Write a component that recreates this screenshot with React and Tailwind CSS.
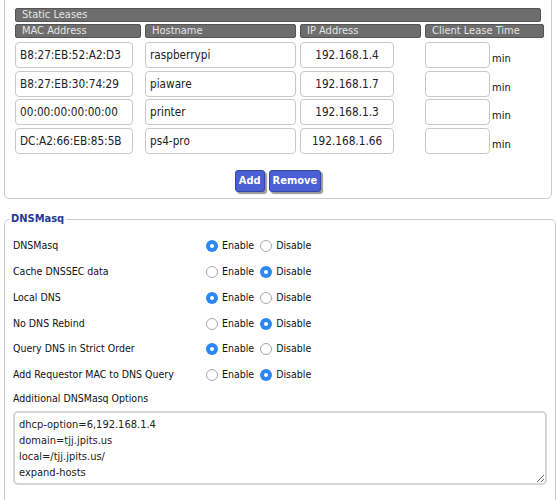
import React from "react";

const FONT = { fontFamily: '"DejaVu Sans Condensed", "DejaVu Sans", sans-serif' };

const leases = [
  { mac: "B8:27:EB:52:A2:D3", host: "raspberrypi", ip: "192.168.1.4" },
  { mac: "B8:27:EB:30:74:29", host: "piaware", ip: "192.168.1.7" },
  { mac: "00:00:00:00:00:00", host: "printer", ip: "192.168.1.3" },
  { mac: "DC:A2:66:EB:85:5B", host: "ps4-pro", ip: "192.168.1.66" },
];

const options = [
  { label: "DNSMasq", on: true },
  { label: "Cache DNSSEC data", on: false },
  { label: "Local DNS", on: true },
  { label: "No DNS Rebind", on: false },
  { label: "Query DNS in Strict Order", on: true },
  { label: "Add Requestor MAC to DNS Query", on: false },
];

function Header({ children }) {
  return (
    <div className="h-[14px] bg-[#6d6d6d] border border-[#555] rounded-[2px] pl-[6px] text-[11px] leading-[12px] text-[#e4e4e4]">
      {children}
    </div>
  );
}

function Field({ value, className = "" }) {
  return (
    <input
      readOnly
      value={value}
      className={`h-[26px] border border-[#c8c8c8] rounded-[4px] bg-white px-[4px] text-[11.7px] text-[#222] outline-none ${className}`}
      style={FONT}
    />
  );
}

function Radio({ checked }) {
  return checked ? (
    <span className="w-[12px] h-[12px] rounded-full bg-[#2d87f5] flex items-center justify-center">
      <span className="w-[4px] h-[4px] rounded-full bg-white" />
    </span>
  ) : (
    <span className="w-[12px] h-[12px] rounded-full border border-[#a9a9a9] bg-white" />
  );
}

export default function App() {
  return (
    <div className="w-[556px] h-[500px] bg-white overflow-hidden text-[#111]" style={FONT}>
      <div className="mx-[4px] -mt-[10px] pt-[17px] pb-[6px] px-[10px] border border-[#cccccc] rounded-[5px]">
        <Header>Static Leases</Header>
        <div className="grid grid-cols-[126px_151px_121px_119px] gap-x-[4px] mt-[2px]">
          <Header>MAC Address</Header>
          <Header>Hostname</Header>
          <Header>IP Address</Header>
          <Header>Client Lease Time</Header>
        </div>
        <div className="mt-[4px] flex flex-col gap-[2.6px]">
          {leases.map((l) => (
            <div key={l.mac} className="grid grid-cols-[126px_151px_121px_119px] gap-x-[4px]">
              <Field value={l.mac} className="w-[118px]" />
              <Field value={l.host} className="w-[151px]" />
              <Field value={l.ip} className="w-[94px] text-center" />
              <div className="flex items-end">
                <Field value="" className="w-[65px]" />
                <span className="ml-[2px] text-[11px] leading-[18px]">min</span>
              </div>
            </div>
          ))}
        </div>
        <div className="flex justify-center gap-[4px] mt-[16px]">
          <button className="h-[22px] px-[3px] bg-[#4a5fd3] border border-[#3446a8] rounded-[3px] text-white font-bold text-[11px] shadow-[2px_2px_1px_#9a9a9a]">
            Add
          </button>
          <button className="h-[22px] px-[3px] bg-[#4a5fd3] border border-[#3446a8] rounded-[3px] text-white font-bold text-[11px] shadow-[2px_2px_1px_#9a9a9a]">
            Remove
          </button>
        </div>
      </div>

      <fieldset className="mx-[4px] mt-[12px] border border-[#cccccc] rounded-[5px] px-[8px] pb-[40px]">
        <legend className="-ml-[4px] px-[2px] text-[11px] font-bold text-[#26379a]">DNSMasq</legend>
        <div className="pt-[6px]">
          {options.map((o) => (
            <div key={o.label} className="h-[25.8px] flex items-center text-[10.5px]">
              <span className="w-[193px]">{o.label}</span>
              <Radio checked={o.on} />
              <span className="ml-[4px]">Enable</span>
              <span className="ml-[6px]" />
              <Radio checked={!o.on} />
              <span className="ml-[4px]">Disable</span>
            </div>
          ))}
          <div className="h-[22px] flex items-center text-[10.5px]">Additional DNSMasq Options</div>
          <textarea
            readOnly
            className="mt-[1px] w-[534px] h-[74px] border-2 border-[#d6d6d6] rounded-[5px] px-[4px] pt-[4px] text-[11px] leading-[16px] text-[#222] outline-none block"
            style={FONT}
            value={"dhcp-option=6,192.168.1.4\ndomain=tjj.jpits.us\nlocal=/tjj.jpits.us/\nexpand-hosts"}
          />
        </div>
      </fieldset>
    </div>
  );
}
